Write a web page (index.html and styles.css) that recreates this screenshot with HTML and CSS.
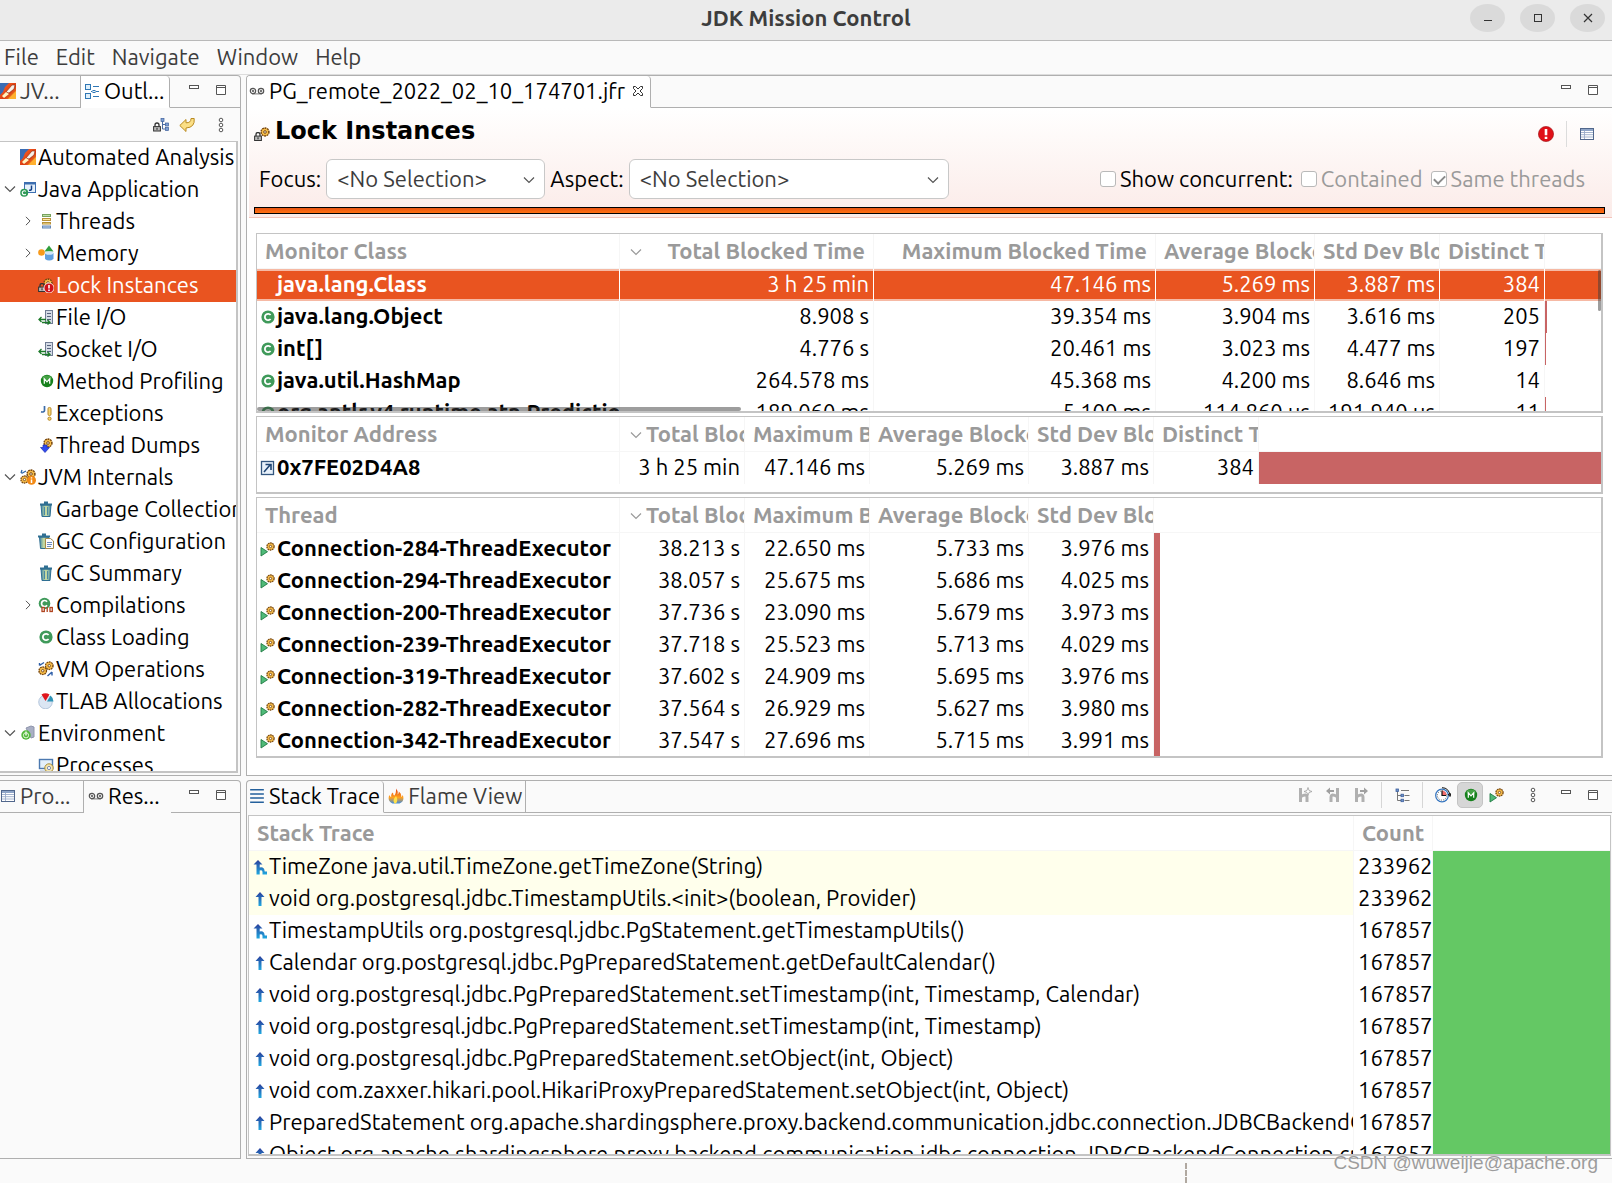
FILE: index.html
```html
<!DOCTYPE html>
<html lang="en">
<head>
<meta charset="utf-8">
<title>JDK Mission Control</title>
<link rel="stylesheet" href="styles.css">
</head>
<body>
<svg class="sprite" aria-hidden="true">
  <defs>
    <linearGradient id="g-jmc" x1="0" y1="0" x2="1" y2="1"><stop offset="0" stop-color="#1d50a0"/><stop offset=".3" stop-color="#f0541c"/><stop offset=".6" stop-color="#d93a12"/><stop offset="1" stop-color="#ffb52e"/></linearGradient>
    <linearGradient id="g-arrow" x1="0" y1="0" x2="0" y2="1"><stop offset="0" stop-color="#2b3f9c"/><stop offset="1" stop-color="#1fa8e0"/></linearGradient>
    <linearGradient id="g-bin" x1="0" y1="0" x2="1" y2="0"><stop offset="0" stop-color="#3f86a8"/><stop offset=".5" stop-color="#cfe0a0"/><stop offset="1" stop-color="#3f86a8"/></linearGradient>
    <linearGradient id="g-flame" x1="0" y1="0" x2="0" y2="1"><stop offset="0" stop-color="#e03a10"/><stop offset=".6" stop-color="#ffa21f"/><stop offset="1" stop-color="#3c8be0"/></linearGradient>
  </defs>
  <symbol id="gear" viewBox="0 0 10 10"><circle cx="5" cy="5" r="3.9" fill="#f3b33c" stroke="#7a4a12" stroke-width="1.6" stroke-dasharray="1.8 .7"/><circle cx="5" cy="5" r="3.1" fill="#f6bd4a"/><circle cx="5" cy="5" r="1.3" fill="#fff" stroke="#7a4a12"/></symbol>
  <symbol id="lock" viewBox="0 0 8 9"><path d="M2 4.500V2.500a2 2 0 0 1 4 0v2" fill="none" stroke="#333" stroke-width="1.300"/><rect x=".6" y="4.100" width="6.800" height="4.400" fill="#b9b9b9" stroke="#333"/><path d="M4 5.300v2" stroke="#222"/></symbol>
  <symbol id="jmc" viewBox="0 0 16 16"><rect width="16" height="16" fill="url(#g-jmc)"/><path d="M0 0h9L5 4 3 9 0 12z" fill="#3a6cb4"/><path d="M16 8v8H8z" fill="#ffb02e"/><path d="M12 2l3 0-1 4-5 4-3-1z" fill="#f6f0e8" stroke="#8c2a10" stroke-width=".6"/><path d="M6 9l3 2-5 4-2-2z" fill="#fff4c0"/></symbol>
  <symbol id="outline" viewBox="0 0 16 16"><g fill="#dff0fb" stroke="#2f77b5"><rect x="1.500" y="1.500" width="5" height="5"/><rect x="1.500" y="10.500" width="5" height="5"/><rect x="9" y="7.500" width="2" height="2"/></g><path d="M9 3.500h6M7 8.500h1M12 8.500h3M9 13.500h6" stroke="#2f77b5"/></symbol>
  <symbol id="tape" viewBox="0 0 16 16"><g fill="#eee" stroke="#555" stroke-width="1.200"><circle cx="4" cy="8" r="2.700"/><circle cx="12" cy="8" r="2.700"/></g><path d="M3 10.900h10M3 7l2 2M5 7l-2 2M11 7l2 2M13 7l-2 2" stroke="#555" stroke-width=".8"/></symbol>
  <symbol id="javaapp" viewBox="0 0 16 16"><rect x="4.500" y="1.500" width="11" height="10" fill="#e6f1fb" stroke="#3d6fb0"/><path d="M4 2.500h12" stroke="#3d6fb0" stroke-width="2"/><path d="M11.500 4.500v3.500q0 1.500-2.500 1.200" fill="none" stroke="#123f86" stroke-width="1.500"/><circle cx="4.200" cy="11.800" r="4" fill="#2f9a57"/><path d="M5.800 10.500a2 2 0 1 0 0 2.600" fill="none" stroke="#fff" stroke-width="1.100"/></symbol>
  <symbol id="threads" viewBox="0 0 16 16"><g stroke-width="1"><rect x="4.500" y="1.500" width="8" height="2" fill="#bfe0a8" stroke="#79a35f"/><rect x="4.500" y="5.500" width="8" height="2" fill="#fbe9a0" stroke="#b8923a"/><rect x="4.500" y="9.500" width="8" height="1.500" fill="#fbe9a0" stroke="#b8923a"/><rect x="4.500" y="13" width="8" height="2" fill="#bcd3ee" stroke="#6486b5"/></g></symbol>
  <symbol id="memory" viewBox="0 0 16 16"><circle cx="3.500" cy="7.500" r="3.300" fill="#f79a1c"/><path d="M11 .5l4.500 6h-9z" fill="#2f9e3c"/><path d="M7 8v6q4 3 8.500 0V8z" fill="#5f9fdf"/><ellipse cx="11.200" cy="8" rx="4.300" ry="1.800" fill="#cfe5f8"/></symbol>
  <symbol id="alert" viewBox="0 0 16 16"><circle cx="8" cy="8" r="7.600" fill="#e01018" stroke="#9c0f12" stroke-width=".6"/><path d="M8 3v6.300" stroke="#fff" stroke-width="2.600"/><path d="M8 10.800v2.300" stroke="#fff" stroke-width="2.600"/></symbol>
  <symbol id="locksalert" viewBox="0 0 16 16"><use href="#gear" x="5" y="1" width="10" height="10"/><use href="#lock" x="0" y="6" width="8" height="9"/><circle cx="11" cy="11" r="5" fill="#cf1019" stroke="#fff" stroke-width=".8"/><path d="M11 8v3.500M11 12.500v1.500" stroke="#fff" stroke-width="1.600"/></symbol>
  <symbol id="locks" viewBox="0 0 16 16"><use href="#gear" x="6" y="1" width="10" height="10"/><use href="#lock" x="0" y="6" width="8" height="9"/></symbol>
  <symbol id="io" viewBox="0 0 16 16"><rect x="7.500" y="1.500" width="7" height="13" fill="#d5dbe6" stroke="#707c93"/><path d="M9 4.500h4M9 7.500h4M9 10.500h4" stroke="#56627c"/><path d="M1 10.500h7M3.500 8L1 10.500 3.500 13M4 13.500h8M9.500 11l2.500 2.500-2.500 2" fill="none" stroke="#1d7a2a" stroke-width="1.300"/></symbol>
  <symbol id="method" viewBox="0 0 16 16"><circle cx="9" cy="8" r="6.200" fill="#16801c"/><ellipse cx="9" cy="5" rx="4.500" ry="2.500" fill="#58b055" opacity=".7"/><path d="M6.300 10.800V5.800L9 8.800l2.700-3v5" fill="none" stroke="#fff" stroke-width="1.200"/></symbol>
  <symbol id="exception" viewBox="0 0 16 16"><path d="M6.500 1v4.500q0 2-3.500 1.300" fill="none" stroke="#3c6ca8" stroke-width="1.700"/><rect x="10" y="2.500" width="3" height="8" rx="1.300" fill="#f7d774" stroke="#b8892a"/><circle cx="11.500" cy="13.700" r="1.600" fill="#f7d774" stroke="#b8892a"/></symbol>
  <symbol id="dump" viewBox="0 0 16 16"><use href="#gear" x="5" y="1" width="10" height="10"/><path d="M5 8h4v2.500h2.500L7 15.500 2.500 10.500H5z" fill="#2f49f0" stroke="#1c2fae" stroke-width=".7"/></symbol>
  <symbol id="internals" viewBox="0 0 16 16"><use href="#gear" x="6" y="0" width="10" height="10"/><use href="#gear" x="0" y="6" width="9" height="9"/><circle cx="11.500" cy="11.300" r="4.500" fill="#f28a16"/><path d="M11.500 8.300v1.300M11.500 10.500v3.500" stroke="#fff" stroke-width="1.500"/><path d="M1 4l1-3M1.500 4.500L6 2" stroke="#2d66a8" stroke-width="1.300"/></symbol>
  <symbol id="bin" viewBox="0 0 16 16"><path d="M3 4h10l-1 11.500H4z" fill="url(#g-bin)" stroke="#2f6f92"/><path d="M2 3.500h12M6 1.500h4" stroke="#2f6f92" stroke-width="1.800"/><path d="M6.500 6v8M9.500 6v8" stroke="#4a8aa5"/></symbol>
  <symbol id="binlist" viewBox="0 0 16 16"><path d="M1.500 4h9l-1 11.500h-7z" fill="url(#g-bin)" stroke="#2f6f92"/><path d="M0 3.500h12M4 1.500h4" stroke="#2f6f92" stroke-width="1.800"/><path d="M7.500 5.500h5l3 2.500v7.500h-8z" fill="#fbfcff" stroke="#a58a4a"/><path d="M9 9.500h5M9 11.500h5M9 13.500h4" stroke="#5a7fb8" stroke-width=".9"/></symbol>
  <symbol id="class" viewBox="0 0 16 16"><circle cx="8" cy="8" r="6.600" fill="#3f9a5a"/><path d="M10.600 6a3.200 3.200 0 1 0 0 4" fill="none" stroke="#fff" stroke-width="1.800"/></symbol>
  <symbol id="compile" viewBox="0 0 16 16"><circle cx="6.500" cy="6.500" r="5.800" fill="#3f9a5a"/><path d="M9 4.800a3 3 0 1 0 0 3.400" fill="none" stroke="#fff" stroke-width="1.700"/><g fill="#fff" stroke="#b0431f" stroke-width="1.300"><rect x="4" y="10.500" width="2.300" height="4"/><path d="M9.200 10v5"/><rect x="12" y="10.500" width="2.300" height="4"/></g></symbol>
  <symbol id="vmops" viewBox="0 0 16 16"><use href="#gear" x="6.500" y="0" width="9.500" height="9.500"/><use href="#gear" x="0" y="5" width="9.500" height="9.500"/><path d="M1.500 4.500V2M1.500 4.500L6 1.500M14 11v3.500M14 11l-4.500 4" stroke="#2d5ea8" stroke-width="1.400"/></symbol>
  <symbol id="tlab" viewBox="0 0 16 16"><circle cx="7.500" cy="9" r="6.800" fill="#dbe6f3" stroke="#9db4d0" stroke-width=".7"/><path d="M7.500 8L3.500 1.500q4-2.500 8 0z" fill="#e0151c"/><path d="M9 8.500l3.500-6q3 2.500 3 6z" fill="#2f93b5"/></symbol>
  <symbol id="env" viewBox="0 0 16 16"><path d="M6 3l5-2 3 1v10l-3 1z" fill="#a9afc4" stroke="#8f95ac"/><circle cx="6" cy="10" r="4.700" fill="#52b83a"/><path d="M6 6.500v4" stroke="#fff" stroke-width="1.300"/><circle cx="6" cy="10.300" r="2.600" fill="none" stroke="#e2f6d8"/></symbol>
  <symbol id="process" viewBox="0 0 16 16"><rect x="1.500" y="2.500" width="13" height="9" fill="#e3effa" stroke="#4c79b0" stroke-width="1.400"/><path d="M2 14.500h5" stroke="#4c79b0" stroke-width="1.500"/><circle cx="11" cy="11" r="4.200" fill="#f4e6b0" stroke="#a98c36"/><circle cx="11" cy="11" r="1.600" fill="#fff" stroke="#7b8bb0"/></symbol>
  <symbol id="sheet" viewBox="0 0 16 16"><rect x="1.500" y="2.500" width="13" height="11" fill="#fff" stroke="#51678c"/><path d="M2 4h12" stroke="#8fa5c8" stroke-width="2"/><path d="M2 6.500h12M2 8.700h12M2 11h12M5.500 5v8" stroke="#9bacc9" stroke-width=".9"/></symbol>
  <symbol id="locktree" viewBox="0 0 16 16"><use href="#lock" x="0" y="5" width="8" height="10"/><path d="M9.500 4v8h3M9.500 7.500h3" fill="none" stroke="#4a6aa0"/><g fill="#7fa0d4" stroke="#3c5f9c" stroke-width=".7"><rect x="8" y="1.500" width="3" height="3"/><rect x="12.500" y="6" width="3" height="3"/><rect x="12.500" y="10.500" width="3" height="3"/></g></symbol>
  <symbol id="back" viewBox="0 0 16 16"><path d="M.8 8.500L7 2.500v3.300q5 .2 5-4.300h3.200q1 9-8.200 9.500v3.500z" fill="#fbdf86" stroke="#b98a22"/></symbol>
  <symbol id="dots" viewBox="0 0 6 16"><g fill="#fff" stroke="#555"><circle cx="3" cy="3" r="1.800"/><circle cx="3" cy="8" r="1.800"/><circle cx="3" cy="13" r="1.800"/></g></symbol>
  <symbol id="min" viewBox="0 0 10 14"><rect x=".5" y="2.500" width="9" height="3" fill="#fff" stroke="#555"/></symbol>
  <symbol id="max" viewBox="0 0 10 14"><path d="M.5 2.500h9v9h-9zM.5 4.500h9" fill="#fff" stroke="#555"/></symbol>
  <symbol id="down" viewBox="0 0 12 8"><path d="M1 1.500l5 5 5-5" fill="none" stroke="currentColor" stroke-width="1.200"/></symbol>
  <symbol id="right" viewBox="0 0 8 12"><path d="M1.500 1l5 5-5 5" fill="none" stroke="currentColor" stroke-width="1.200"/></symbol>
  <symbol id="close" viewBox="0 0 12 12"><path d="M1.500 1.500h2L6 4l2.500-2.500h2v2L8 6l2.500 2.500v2h-2L6 8l-2.500 2.500h-2v-2L4 6 1.500 3.500z" fill="#fff" stroke="#333"/></symbol>
  <symbol id="address" viewBox="0 0 16 16"><rect x="1.500" y="1.500" width="12" height="13" fill="#e8f1fb" stroke="#33567f" stroke-width="1.300"/><path d="M4 12l6-7M5.500 4.500H11V10" fill="none" stroke="#1f4573" stroke-width="1.600"/></symbol>
  <symbol id="runthread" viewBox="0 0 16 16"><use href="#gear" x="6" y="1" width="9" height="9"/><path d="M1 6.500v8.500l6.500-4.300z" fill="#4fba78" stroke="#1f7a43" stroke-width=".9"/></symbol>
  <symbol id="lines" viewBox="0 0 14 14"><path d="M1 1.500h12M1 5.200h12M1 8.800h12M1 12.500h12" stroke="#24609c" stroke-width="1.300"/></symbol>
  <symbol id="flame" viewBox="0 0 16 16"><path d="M8 .5q2.500 3 1.500 6 1.500-1 1.300-3Q14 6 13 9q1.500-.5 1.800-2Q17 13 11.500 15.500h-7Q-1 13 1.300 7 2 9 3.300 9 2.500 6 5 4.500 5 7 6.500 7.500 8.500 4 8 .5z" fill="url(#g-flame)"/><path d="M8 8q2.500 4 0 7.500H6.500Q4 12 8 8z" fill="#ffe14a"/></symbol>
  <symbol id="up" viewBox="0 0 14 16"><path d="M7 1l4.500 5H8.500v9h-3V6h-3z" fill="url(#g-arrow)"/></symbol>
  <symbol id="branch" viewBox="0 0 14 16"><path d="M5 1l4.500 4.500H6.700v3q4.500-1 5 4H14v3H9.500v-2.500q0-2.500-2.800-1.500v4H3.500V5.500H.5z" fill="url(#g-arrow)"/></symbol>
  <symbol id="h-star" viewBox="0 0 14 16"><path d="M2.500 1v14M3 9.500q6-3.500 6 1V15" fill="none" stroke="#b0b0b0" stroke-width="3"/><path d="M10 .5l1 3 3 1-3 1-1 3-1-3-3-1 3-1z" fill="#fff" stroke="#a0a0a0" stroke-width=".8"/></symbol>
  <symbol id="h-left" viewBox="0 0 14 16"><path d="M11.500 1v14M11 9.500q-6-3.500-6 1V15" fill="none" stroke="#b0b0b0" stroke-width="3"/><path d="M0 4l4-3.500V3h4v2H4v2.500z" fill="#a0a0a0"/></symbol>
  <symbol id="h-right" viewBox="0 0 14 16"><path d="M2.500 1v14M3 9.500q6-3.500 6 1V15" fill="none" stroke="#b0b0b0" stroke-width="3"/><path d="M14 4l-4-3.500V3H6v2h4v2.500z" fill="#a0a0a0"/></symbol>
  <symbol id="treelist" viewBox="0 0 16 16"><path d="M3.500 3v10.500H7M3.500 8.500H7M7 3.500h8M10.500 8.500h5M10.500 13.500h5" fill="none" stroke="#777"/><g fill="#6f93cc" stroke="#3c5f9c" stroke-width=".8"><rect x="2" y="2" width="2.500" height="2.500"/><rect x="7" y="7.200" width="2.500" height="2.500"/><rect x="7" y="12.200" width="2.500" height="2.500"/></g></symbol>
  <symbol id="clock" viewBox="0 0 16 16"><circle cx="7" cy="8.500" r="6.300" fill="#fff" stroke="#3a78c0" stroke-width="1.300"/><circle cx="7" cy="8.500" r="4.600" fill="none" stroke="#333" stroke-dasharray="1 1.400" stroke-width=".8"/><path d="M7 8V3.500q4 .5 4.500 4.500z" fill="#f26b6b"/><path d="M7 3.500v5h4" fill="none" stroke="#111" stroke-width="1.200"/><path d="M7 .7q7 0 8 8M13 7l2 2.500L16 6" fill="none" stroke="#111"/></symbol>
</svg>

<div class="window">
  <header class="titlebar">
    <h1 class="titlebar__name">JDK Mission Control</h1>
    <div class="titlebar__buttons">
      <button class="winbtn" aria-label="Minimize"><svg viewBox="0 0 12 12"><path d="M2 8.500h8" stroke="#333"/></svg></button>
      <button class="winbtn" aria-label="Maximize"><svg viewBox="0 0 12 12"><rect x="2.500" y="2.500" width="7" height="7" fill="none" stroke="#333"/></svg></button>
      <button class="winbtn" aria-label="Close"><svg viewBox="0 0 12 12"><path d="M2 2l8 8M10 2l-8 8" stroke="#333" stroke-width="1.200"/></svg></button>
    </div>
  </header>

  <nav class="menubar">
    <button>File</button><button>Edit</button><button>Navigate</button><button>Window</button><button>Help</button>
  </nav>

  <main class="workbench">
    <section class="folder folder--side">
      <div class="tabs">
        <button class="tab tab--jvm"><svg class="icon"><use href="#jmc"/></svg>JV...</button>
        <button class="tab tab--active tab--outline"><svg class="icon"><use href="#outline"/></svg>Outl...</button>
        <div class="tabs__rest">
          <button class="tool" aria-label="Minimize"><svg class="mini"><use href="#min"/></svg></button>
          <button class="tool" aria-label="Maximize"><svg class="mini"><use href="#max"/></svg></button>
        </div>
      </div>
      <div class="viewbar">
        <button class="tool" aria-label="Lock tree"><svg class="icon"><use href="#locktree"/></svg></button>
        <button class="tool" aria-label="Back"><svg class="icon"><use href="#back"/></svg></button>
        <button class="tool tool--menu" aria-label="View menu"><svg class="dots"><use href="#dots"/></svg></button>
      </div>
      <ul class="tree">
        <li class="node"><span class="twist"></span><svg class="icon"><use href="#jmc"/></svg>Automated Analysis Results</li>
        <li class="node"><span class="twist"><svg class="chev"><use href="#down"/></svg></span><svg class="icon"><use href="#javaapp"/></svg>Java Application</li>
        <li class="node node--sub"><span class="twist"><svg class="chev"><use href="#right"/></svg></span><svg class="icon"><use href="#threads"/></svg>Threads</li>
        <li class="node node--sub"><span class="twist"><svg class="chev"><use href="#right"/></svg></span><svg class="icon"><use href="#memory"/></svg>Memory</li>
        <li class="node node--sub node--selected"><span class="twist"></span><svg class="icon"><use href="#locksalert"/></svg>Lock Instances</li>
        <li class="node node--sub"><span class="twist"></span><svg class="icon"><use href="#io"/></svg>File I/O</li>
        <li class="node node--sub"><span class="twist"></span><svg class="icon"><use href="#io"/></svg>Socket I/O</li>
        <li class="node node--sub"><span class="twist"></span><svg class="icon"><use href="#method"/></svg>Method Profiling</li>
        <li class="node node--sub"><span class="twist"></span><svg class="icon"><use href="#exception"/></svg>Exceptions</li>
        <li class="node node--sub"><span class="twist"></span><svg class="icon"><use href="#dump"/></svg>Thread Dumps</li>
        <li class="node"><span class="twist"><svg class="chev"><use href="#down"/></svg></span><svg class="icon"><use href="#internals"/></svg>JVM Internals</li>
        <li class="node node--sub"><span class="twist"></span><svg class="icon"><use href="#bin"/></svg>Garbage Collections</li>
        <li class="node node--sub"><span class="twist"></span><svg class="icon"><use href="#binlist"/></svg>GC Configuration</li>
        <li class="node node--sub"><span class="twist"></span><svg class="icon"><use href="#bin"/></svg>GC Summary</li>
        <li class="node node--sub"><span class="twist"><svg class="chev"><use href="#right"/></svg></span><svg class="icon"><use href="#compile"/></svg>Compilations</li>
        <li class="node node--sub"><span class="twist"></span><svg class="icon"><use href="#class"/></svg>Class Loading</li>
        <li class="node node--sub"><span class="twist"></span><svg class="icon"><use href="#vmops"/></svg>VM Operations</li>
        <li class="node node--sub"><span class="twist"></span><svg class="icon"><use href="#tlab"/></svg>TLAB Allocations</li>
        <li class="node"><span class="twist"><svg class="chev"><use href="#down"/></svg></span><svg class="icon"><use href="#env"/></svg>Environment</li>
        <li class="node node--sub"><span class="twist"></span><svg class="icon"><use href="#process"/></svg>Processes</li>
      </ul>
    </section>

    <section class="folder">
      <div class="tabs">
        <button class="tab tab--active tab--file"><svg class="icon"><use href="#tape"/></svg>PG_remote_2022_02_10_174701.jfr<svg class="closer"><use href="#close"/></svg></button>
        <div class="tabs__rest">
          <button class="tool" aria-label="Minimize"><svg class="mini"><use href="#min"/></svg></button>
          <button class="tool" aria-label="Maximize"><svg class="mini"><use href="#max"/></svg></button>
        </div>
      </div>
      <div class="page">
        <header class="form">
          <div class="form__head">
            <svg class="icon"><use href="#locks"/></svg>
            <h2>Lock Instances</h2>
            <button class="tool" aria-label="Show results"><svg class="icon"><use href="#alert"/></svg></button>
            <button class="tool tool--split" aria-label="Table settings"><svg class="icon"><use href="#sheet"/></svg></button>
          </div>
          <div class="form__row">
            <label for="focus">Focus:</label>
            <span class="combo combo--focus"><select id="focus"><option>&lt;No Selection&gt;</option></select><svg class="chev"><use href="#down"/></svg></span>
            <label for="aspect">Aspect:</label>
            <span class="combo combo--aspect"><select id="aspect"><option>&lt;No Selection&gt;</option></select><svg class="chev"><use href="#down"/></svg></span>
            <span class="checks">
              <label class="check"><input type="checkbox">Show concurrent:</label>
              <label class="check check--off"><input type="checkbox" disabled>Contained</label>
              <label class="check check--off"><input type="checkbox" checked disabled>Same threads</label>
            </span>
          </div>
          <div class="range"></div>
        </header>

        <div class="tables">
          <div class="grid grid--class">
            <table>
              <colgroup><col class="c-name"><col class="c-total"><col class="c-max"><col class="c-avg"><col class="c-dev"><col class="c-distinct"><col></colgroup>
              <thead><tr><th class="left">Monitor Class</th><th class="sorted"><svg class="chev"><use href="#down"/></svg>Total Blocked Time</th><th>Maximum Blocked Time</th><th>Average Blocked Time</th><th>Std Dev Blocked Time</th><th>Distinct Threads</th><th></th></tr></thead>
              <tbody>
                <tr class="selected"><td class="name"><span class="icon"></span>java.lang.Class</td><td>3 h 25 min</td><td>47.146 ms</td><td>5.269 ms</td><td>3.887 ms</td><td>384</td><td></td></tr>
                <tr><td class="name"><svg class="icon"><use href="#class"/></svg>java.lang.Object</td><td>8.908 s</td><td>39.354 ms</td><td>3.904 ms</td><td>3.616 ms</td><td>205</td><td class="meter"><div style="width:2px"></div></td></tr>
                <tr><td class="name"><svg class="icon"><use href="#class"/></svg>int[]</td><td>4.776 s</td><td>20.461 ms</td><td>3.023 ms</td><td>4.477 ms</td><td>197</td><td class="meter"><div style="width:1px"></div></td></tr>
                <tr><td class="name"><svg class="icon"><use href="#class"/></svg>java.util.HashMap</td><td>264.578 ms</td><td>45.368 ms</td><td>4.200 ms</td><td>8.646 ms</td><td>14</td><td></td></tr>
                <tr><td class="name"><svg class="icon"><use href="#class"/></svg>org.antlr.v4.runtime.atn.PredictionContext</td><td>189.060 ms</td><td>5.100 ms</td><td>114.860 µs</td><td>191.940 µs</td><td>11</td><td class="meter"><div style="width:1px"></div></td></tr>
              </tbody>
            </table>
            <span class="scroll scroll--x"></span><span class="scroll scroll--y"></span>
          </div>

          <div class="grid grid--address">
            <table>
              <colgroup><col class="c-name"><col class="c-num"><col class="c-num"><col class="c-avg"><col class="c-dev"><col class="c-distinct"><col></colgroup>
              <thead><tr><th class="left">Monitor Address</th><th class="sorted"><svg class="chev"><use href="#down"/></svg>Total Blocked Time</th><th>Maximum Blocked Time</th><th>Average Blocked Time</th><th>Std Dev Blocked Time</th><th>Distinct Threads</th><th></th></tr></thead>
              <tbody>
                <tr><td class="name"><svg class="icon"><use href="#address"/></svg>0x7FE02D4A8</td><td>3 h 25 min</td><td>47.146 ms</td><td>5.269 ms</td><td>3.887 ms</td><td>384</td><td class="meter"><div style="width:100%"></div></td></tr>
              </tbody>
            </table>
          </div>

          <div class="grid grid--thread">
            <table>
              <colgroup><col class="c-name"><col class="c-num"><col class="c-num"><col class="c-avg"><col class="c-dev"><col></colgroup>
              <thead><tr><th class="left">Thread</th><th class="sorted"><svg class="chev"><use href="#down"/></svg>Total Blocked Time</th><th>Maximum Blocked Time</th><th>Average Blocked Time</th><th>Std Dev Blocked Time</th><th></th></tr></thead>
              <tbody>
                <tr><td class="name"><svg class="icon"><use href="#runthread"/></svg>Connection-284-ThreadExecutor</td><td>38.213 s</td><td>22.650 ms</td><td>5.733 ms</td><td>3.976 ms</td><td class="meter"><div style="width:6px"></div></td></tr>
                <tr><td class="name"><svg class="icon"><use href="#runthread"/></svg>Connection-294-ThreadExecutor</td><td>38.057 s</td><td>25.675 ms</td><td>5.686 ms</td><td>4.025 ms</td><td class="meter"><div style="width:6px"></div></td></tr>
                <tr><td class="name"><svg class="icon"><use href="#runthread"/></svg>Connection-200-ThreadExecutor</td><td>37.736 s</td><td>23.090 ms</td><td>5.679 ms</td><td>3.973 ms</td><td class="meter"><div style="width:6px"></div></td></tr>
                <tr><td class="name"><svg class="icon"><use href="#runthread"/></svg>Connection-239-ThreadExecutor</td><td>37.718 s</td><td>25.523 ms</td><td>5.713 ms</td><td>4.029 ms</td><td class="meter"><div style="width:6px"></div></td></tr>
                <tr><td class="name"><svg class="icon"><use href="#runthread"/></svg>Connection-319-ThreadExecutor</td><td>37.602 s</td><td>24.909 ms</td><td>5.695 ms</td><td>3.976 ms</td><td class="meter"><div style="width:6px"></div></td></tr>
                <tr><td class="name"><svg class="icon"><use href="#runthread"/></svg>Connection-282-ThreadExecutor</td><td>37.564 s</td><td>26.929 ms</td><td>5.627 ms</td><td>3.980 ms</td><td class="meter"><div style="width:6px"></div></td></tr>
                <tr><td class="name"><svg class="icon"><use href="#runthread"/></svg>Connection-342-ThreadExecutor</td><td>37.547 s</td><td>27.696 ms</td><td>5.715 ms</td><td>3.991 ms</td><td class="meter"><div style="width:6px"></div></td></tr>
              </tbody>
            </table>
          </div>
        </div>
      </div>
    </section>

    <section class="folder folder--side">
      <div class="tabs">
        <button class="tab tab--props"><svg class="icon"><use href="#sheet"/></svg>Pro...</button>
        <button class="tab tab--active tab--plain tab--results"><svg class="icon"><use href="#tape"/></svg>Res...</button>
        <div class="tabs__rest">
          <button class="tool" aria-label="Minimize"><svg class="mini"><use href="#min"/></svg></button>
          <button class="tool" aria-label="Maximize"><svg class="mini"><use href="#max"/></svg></button>
        </div>
      </div>
    </section>

    <section class="folder">
      <div class="tabs">
        <button class="tab tab--active tab--plain tab--stack"><svg class="icon"><use href="#lines"/></svg>Stack Trace</button>
        <button class="tab tab--flame"><svg class="icon"><use href="#flame"/></svg>Flame View</button>
        <div class="tabs__rest">
          <button class="tool" aria-label="Group" disabled><svg class="icon"><use href="#h-star"/></svg></button>
          <button class="tool" aria-label="Previous frame group" disabled><svg class="icon"><use href="#h-left"/></svg></button>
          <button class="tool" aria-label="Next frame group" disabled><svg class="icon"><use href="#h-right"/></svg></button>
          <span class="split"></span>
          <button class="tool" aria-label="Show as tree"><svg class="icon"><use href="#treelist"/></svg></button>
          <span class="split"></span>
          <button class="tool" aria-label="Time"><svg class="icon"><use href="#clock"/></svg></button>
          <button class="tool tool--on" aria-label="Methods"><svg class="icon"><use href="#method"/></svg></button>
          <button class="tool" aria-label="Threads"><svg class="icon"><use href="#runthread"/></svg></button>
          <button class="tool tool--menu" aria-label="View menu"><svg class="dots"><use href="#dots"/></svg></button>
          <button class="tool" aria-label="Minimize"><svg class="mini"><use href="#min"/></svg></button>
          <button class="tool" aria-label="Maximize"><svg class="mini"><use href="#max"/></svg></button>
        </div>
      </div>
      <div class="grid grid--stack">
        <table>
          <colgroup><col><col class="c-count"><col class="c-share"></colgroup>
          <thead><tr><th class="left">Stack Trace</th><th>Count</th><th></th></tr></thead>
          <tbody>
            <tr class="hot"><td class="frame"><svg class="icon"><use href="#branch"/></svg>TimeZone java.util.TimeZone.getTimeZone(String)</td><td>233962</td><td class="meter meter--green"><div style="width:100%"></div></td></tr>
            <tr class="hot"><td class="frame"><svg class="icon"><use href="#up"/></svg>void org.postgresql.jdbc.TimestampUtils.&lt;init&gt;(boolean, Provider)</td><td>233962</td><td class="meter meter--green"><div style="width:100%"></div></td></tr>
            <tr><td class="frame"><svg class="icon"><use href="#branch"/></svg>TimestampUtils org.postgresql.jdbc.PgStatement.getTimestampUtils()</td><td>167857</td><td class="meter meter--green"><div style="width:100%"></div></td></tr>
            <tr><td class="frame"><svg class="icon"><use href="#up"/></svg>Calendar org.postgresql.jdbc.PgPreparedStatement.getDefaultCalendar()</td><td>167857</td><td class="meter meter--green"><div style="width:100%"></div></td></tr>
            <tr><td class="frame"><svg class="icon"><use href="#up"/></svg>void org.postgresql.jdbc.PgPreparedStatement.setTimestamp(int, Timestamp, Calendar)</td><td>167857</td><td class="meter meter--green"><div style="width:100%"></div></td></tr>
            <tr><td class="frame"><svg class="icon"><use href="#up"/></svg>void org.postgresql.jdbc.PgPreparedStatement.setTimestamp(int, Timestamp)</td><td>167857</td><td class="meter meter--green"><div style="width:100%"></div></td></tr>
            <tr><td class="frame"><svg class="icon"><use href="#up"/></svg>void org.postgresql.jdbc.PgPreparedStatement.setObject(int, Object)</td><td>167857</td><td class="meter meter--green"><div style="width:100%"></div></td></tr>
            <tr><td class="frame"><svg class="icon"><use href="#up"/></svg>void com.zaxxer.hikari.pool.HikariProxyPreparedStatement.setObject(int, Object)</td><td>167857</td><td class="meter meter--green"><div style="width:100%"></div></td></tr>
            <tr><td class="frame"><svg class="icon"><use href="#up"/></svg>PreparedStatement org.apache.shardingsphere.proxy.backend.communication.jdbc.connection.JDBCBackendConnection</td><td>167857</td><td class="meter meter--green"><div style="width:100%"></div></td></tr>
            <tr><td class="frame"><svg class="icon"><use href="#up"/></svg>Object org.apache.shardingsphere.proxy.backend.communication.jdbc.connection.JDBCBackendConnection.createStorageResource</td><td>167857</td><td class="meter meter--green"><div style="width:100%"></div></td></tr>
          </tbody>
        </table>
      </div>
    </section>
  </main>

  <footer class="status"><span class="status__grip"></span><span class="credit">CSDN @wuweijie@apache.org</span></footer>
</div>
</body>
</html>
```
FILE: styles.css
```css
* { box-sizing: border-box; }

body {
  margin: 0;
  font: 22px/30px "Ubuntu", "Noto Sans", "Open Sans", sans-serif;
  color: #000;
  background: #fafafa;
}

button, select, input { font: inherit; color: inherit; margin: 0; }
button { border: 0; padding: 0; background: none; }
h1, h2, ul { margin: 0; padding: 0; }
svg { display: block; flex: none; }

.sprite { position: absolute; width: 0; height: 0; }
.icon { width: 16px; height: 16px; flex: none; }
.mini { width: 10px; height: 14px; }
.dots { width: 6px; height: 16px; }
.chev { width: 12px; height: 10px; color: #555; }
.closer { width: 12px; height: 12px; }

.window {
  display: flex;
  flex-direction: column;
  height: 100vh;
  overflow: hidden;
}

/* Title bar and menu */
.titlebar {
  display: grid;
  grid-template-columns: 1fr auto 1fr;
  flex: none;
  height: 41px;
  border-bottom: 1px solid #b9b9b9;
  background: #ebebeb;
}
.titlebar__name {
  grid-column: 2;
  font-size: 22px;
  line-height: 36px;
  color: #3d3d3d;
}
.titlebar__buttons {
  display: flex;
  justify-content: flex-end;
  gap: 15px;
  padding: 4px 7px 0 0;
}
.winbtn {
  display: flex;
  align-items: center;
  justify-content: center;
  width: 35px;
  height: 28px;
  border-radius: 50%;
  background: #dadada;
}
.winbtn svg { width: 12px; height: 12px; }

.menubar {
  display: flex;
  flex: none;
  gap: 17px;
  height: 34px;
  padding: 0 0 2px 4px;
  border-bottom: 1px solid #dcdcdc;
  color: #3d3d3d;
}

/* Workbench */
.workbench {
  display: grid;
  grid-template-columns: 241px minmax(0, 1fr);
  grid-template-rows: minmax(0, 701fr) minmax(0, 379fr);
  gap: 4px 5px;
  flex: 1;
  min-height: 0;
}
.folder {
  display: flex;
  flex-direction: column;
  min-width: 0;
  min-height: 0;
  overflow: hidden;
  border: 1px solid #afafaf;
  border-right: 0;
  border-radius: 4px 0 0 0;
}
.folder--side {
  border-right: 1px solid #afafaf;
  border-left: 0;
  border-radius: 0 4px 0 0;
}

.tabs { display: flex; flex: none; height: 32px; }
.tab {
  display: flex;
  align-items: center;
  gap: 4px;
  padding-bottom: 1px;
  border-right: 1px solid #afafaf;
  border-bottom: 1px solid #afafaf;
  white-space: nowrap;
  color: #3d3d3d;
}
.tab--active {
  border-bottom-color: transparent;
  border-radius: 0 4px 0 0;
  background: #fff;
  color: #000;
}
.tab--plain { background: none; }
.tab--jvm { width: 81px; }
.tab--outline { width: 89px; padding-left: 3px; }
.tab--props { width: 84px; }
.tab--results { width: 87px; padding-left: 4px; border-right: 0; }
.tab--file { padding-left: 2px; padding-right: 6px; }
.tab--file .closer { margin-left: 3px; }
.tab--stack { padding-left: 2px; padding-right: 3px; }
.tab--flame { padding-left: 4px; padding-right: 3px; }
.tabs__rest {
  display: flex;
  flex: 1;
  align-items: center;
  justify-content: flex-end;
  gap: 12px;
  padding: 0 14px 4px 0;
  border-bottom: 1px solid #afafaf;
}
.tabs__rest .tool:last-child { margin-left: 5px; }
.tool { display: flex; align-items: center; justify-content: center; }
.tool--on {
  width: 26px;
  height: 26px;
  margin: 0 -6px;
  border: 1px solid #c4c4c4;
  border-radius: 5px;
  background: #d6d6d6;
}
.tool--menu { padding: 0 13px; }
.split { width: 1px; height: 26px; background: #d6d6d6; }

.viewbar {
  display: flex;
  align-items: center;
  justify-content: flex-end;
  gap: 10px;
  flex: none;
  height: 33px;
  padding-right: 3px;
}

/* Outline tree */
.tree {
  flex: 1;
  min-height: 0;
  margin: 0 2px 2px 0;
  overflow: hidden;
  border: 1px solid #c4c4c4;
  border-width: 1px 2px 2px 0;
  background: #fff;
  list-style: none;
}
.node {
  display: flex;
  align-items: center;
  gap: 2px;
  height: 32px;
  padding-bottom: 2px;
  white-space: nowrap;
}
.node--sub { padding-left: 18px; }
.node--selected { background: #e95420; color: #fff; }
.twist { width: 18px; padding-left: 4px; flex: none; }

/* Editor page */
.page {
  display: flex;
  flex-direction: column;
  flex: 1;
  min-height: 0;
  background: #fff;
}
.form {
  flex: none;
  margin-left: 2px;
  padding: 0 7px 0 5px;
  border-bottom: 1px solid #f3c4bb;
  background: linear-gradient(#fff, #fbebe8);
}
.form__head {
  display: flex;
  align-items: center;
  gap: 5px;
  height: 51px;
  padding-right: 10px;
}
.form__head h2 {
  flex: 1;
  padding-bottom: 6px;
  font: bold 24px/32px "DejaVu Sans", sans-serif;
}
.tool--split {
  height: 26px;
  margin-left: 7px;
  padding-left: 12px;
  border-left: 1px solid #dcdcdc;
}
.form__row {
  display: flex;
  align-items: center;
  gap: 5px;
  padding-left: 5px;
}
.combo { position: relative; }
.combo--focus { width: 219px; }
.combo--aspect { width: 320px; }
.combo select {
  display: block;
  width: 100%;
  height: 40px;
  padding: 0 10px;
  border: 1px solid #c8c8c8;
  border-radius: 6px;
  background: #fff;
  color: #3d3d3d;
  appearance: none;
}
.combo .chev { position: absolute; right: 10px; top: 16px; pointer-events: none; }
.checks { display: flex; gap: 8px; margin-left: auto; padding-right: 20px; }
.check { display: flex; align-items: center; gap: 4px; }
.check--off { color: #9a9a9a; }
.check input {
  width: 16px;
  height: 16px;
  border: 1px solid #b9b9b9;
  border-radius: 3px;
  background: #fff;
  appearance: none;
}
.check input:checked::before {
  content: "";
  display: block;
  width: 9px;
  height: 5px;
  margin: 3px 2px;
  border: solid #8a8a8a;
  border-width: 0 0 2px 2px;
  transform: rotate(-45deg);
}
.range {
  height: 7px;
  margin: 8px 0 3px;
  border: 1px solid #000;
  background: linear-gradient(#e95410, #ff6f10);
}

/* Tables */
.tables {
  display: flex;
  flex-direction: column;
  gap: 3px;
  flex: 1;
  min-height: 0;
  padding: 15px 9px 17px 9px;
}
.grid {
  position: relative;
  min-height: 0;
  overflow: hidden;
  border: 1px solid #c4c4c4;
  border-right-width: 2px;
  border-bottom-width: 2px;
  background: #fff;
}
.grid--class { flex: 177 1 0; }
.grid--address { flex: 75 1 0; }
.grid--thread { flex: 258 1 0; }
.grid--stack { flex: 1; margin: 2px 1px 2px 1px; border-right-width: 1px; }
.grid table {
  width: 100%;
  border-collapse: separate;
  border-spacing: 0;
  table-layout: fixed;
}
.c-name { width: 363px; }
.c-total { width: 254px; }
.c-max { width: 282px; }
.c-num { width: 125px; }
.c-avg { width: 159px; }
.c-dev { width: 125px; }
.c-distinct { width: 105px; }
.c-count { width: 79px; }
.c-share { width: 177px; }

th, td {
  overflow: hidden;
  padding: 0 4px;
  border-right: 1px solid #f6f6f6;
  white-space: nowrap;
  text-align: right;
  vertical-align: top;
}
th:last-child, td:last-child { border-right: 0; }
th {
  height: 35px;
  padding: 2px 8px 0;
  border-bottom: 1px solid #f6f6f6;
  color: #9a9a9a;
}
.left { text-align: left; }
.sorted .chev { float: left; margin: 11px 0 0 2px; color: #9a9a9a; }
.grid--address .sorted .chev, .grid--thread .sorted .chev { margin-right: 4px; }
td { height: 32px; }
.name { font-weight: bold; padding: 0 0 0 3px; text-align: left; }
.frame { padding: 0 0 0 3px; text-align: left; }
.name .icon, .frame .icon { display: inline-block; margin-right: 1px; vertical-align: -1px; }
.hot .frame { background: #ffffec; }
.meter { padding: 0; }
.meter div { height: 32px; background: #c86464; }
.meter--green div { background: #64c864; }
.selected td {
  border-right-color: #fff;
  background: #e95420;
  box-shadow: inset 0 2px #f6b9a4, inset 0 -2px #f6b9a4;
  color: #fff;
}

.scroll { position: absolute; border-radius: 2px; background: rgba(60, 60, 60, .5); }
.scroll--x { left: 0; bottom: 0; width: 36%; height: 4px; }
.scroll--y { right: 0; top: 36px; width: 3px; height: 41px; }

/* Status line */
.status {
  display: grid;
  grid-template-columns: 1187px 1fr;
  flex: none;
  height: 24px;
  padding-top: 4px;
}
.status__grip { border-right: 2px dashed #b0a8a0; }
.credit {
  position: absolute;
  right: 14px;
  bottom: 4px;
  font: 19px/32px "Liberation Sans", sans-serif;
  color: #9c9c9c;
  text-shadow: 0 0 1px #fff;
}
```
